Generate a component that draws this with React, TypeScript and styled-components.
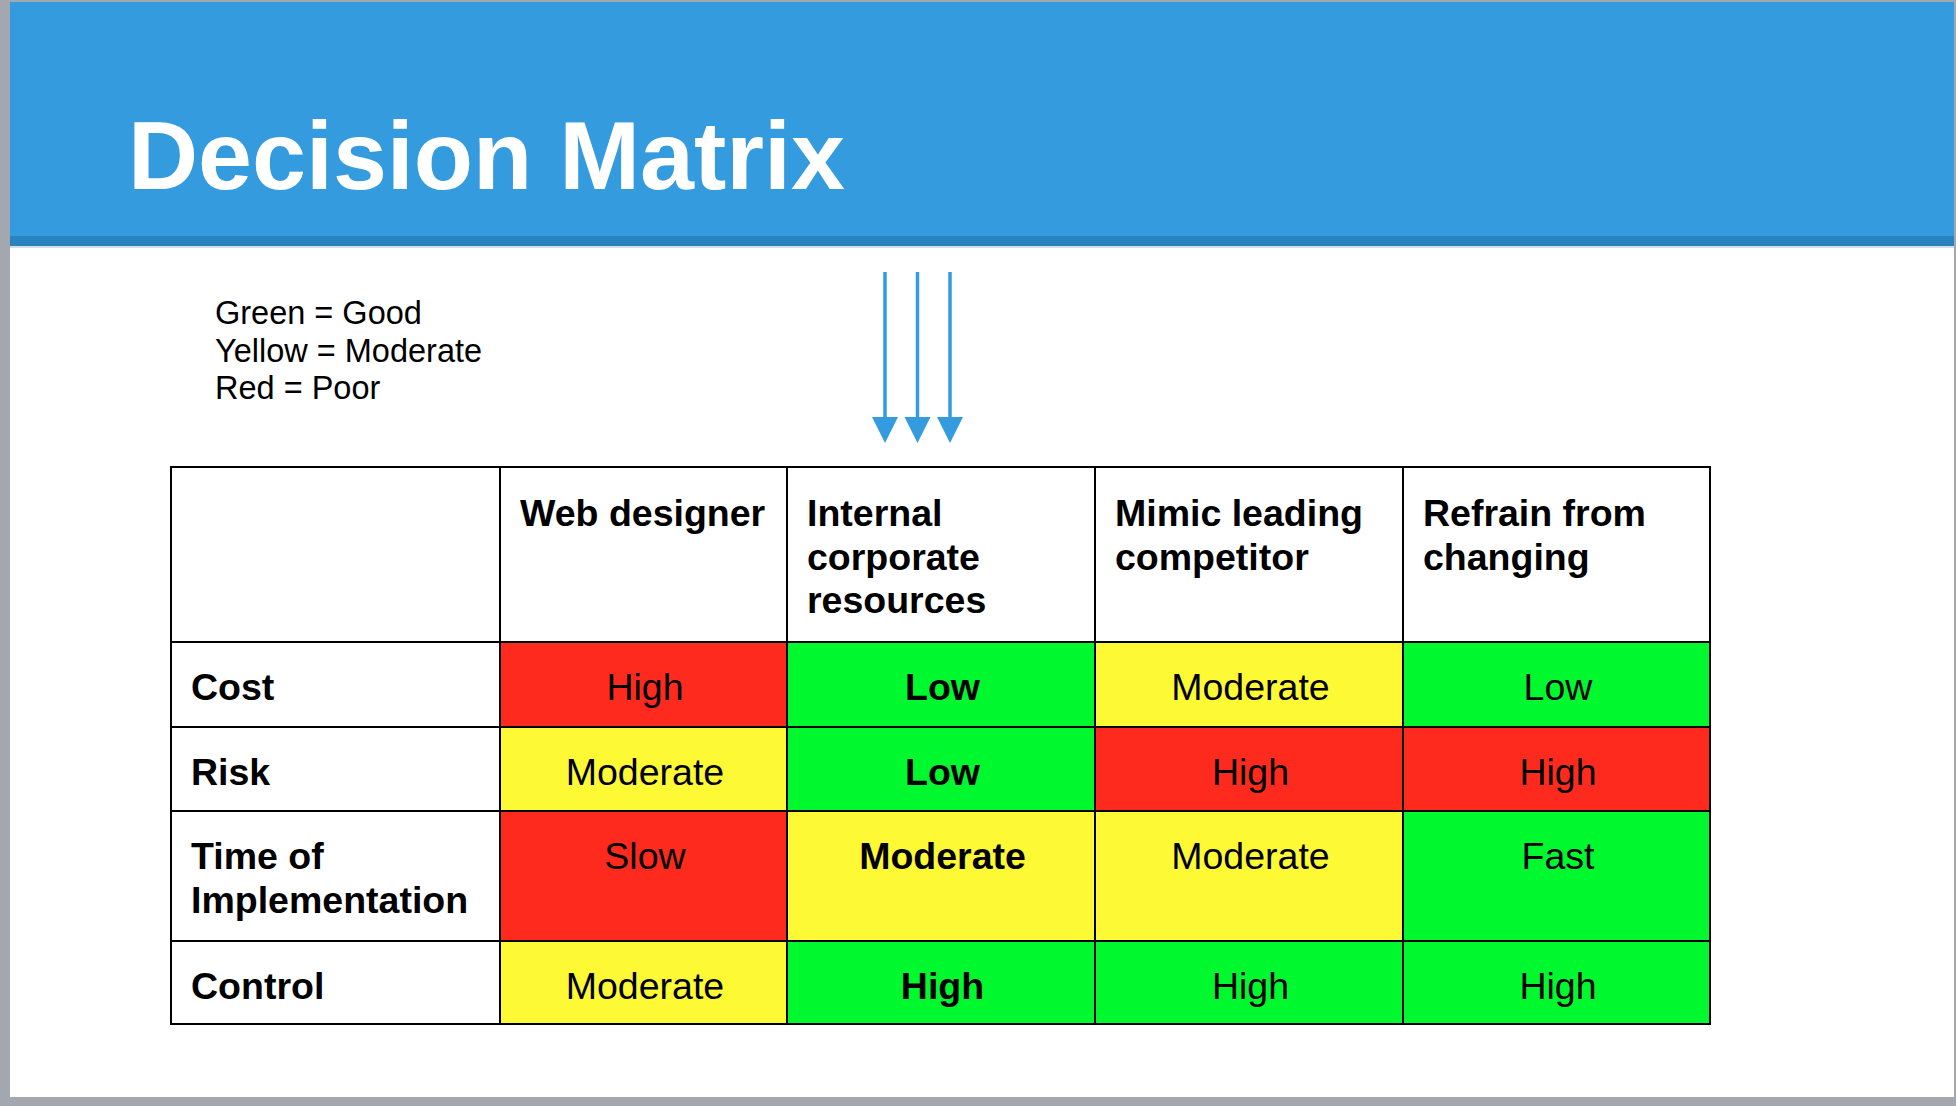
import styled, { createGlobalStyle } from "styled-components";

const GlobalStyle = createGlobalStyle`
  html, body {
    margin: 0;
    padding: 0;
    background: #a3a8b0;
    font-family: "Liberation Sans", Arial, sans-serif;
  }
`;

const Slide = styled.div`
  margin: 2px 2px 9px 10px;
  width: 1944px;
  height: 1095px;
  background: #ffffff;
  display: flex;
  flex-direction: column;
`;

const TitleBar = styled.header`
  height: 234px;
  background: #349bdf;
  border-bottom: 10px solid #2883bf;
  box-shadow: 0 2px 0 #d3dee8;
  box-sizing: content-box;
  padding-left: 118px;
  display: flex;
  align-items: flex-start;
`;

const Title = styled.h1`
  margin: 105px 0 0;
  font-size: 97px;
  line-height: 1;
  font-weight: 700;
  color: #ffffff;
`;

const Content = styled.main`
  display: flex;
  flex-direction: column;
  padding: 26px 0 0 160px;
`;

const TopRow = styled.div`
  display: grid;
  grid-template-columns: 702px auto;
  align-items: start;
`;

const Legend = styled.div`
  margin: 23px 0 0 45px;
  font-size: 32.5px;
  line-height: 37.5px;
  color: #000000;
`;

const Matrix = styled.div`
  margin-top: 23px;
  display: grid;
  grid-template-columns: 327px 285px 306px 306px 305px;
  grid-template-rows: 173px 83px 82px 128px 81px;
  gap: 2px;
  padding: 2px;
  background: #000000;
  width: max-content;
`;

type Tone = "white" | "red" | "green" | "yellow";

const tones: Record<Tone, string> = {
  white: "#ffffff",
  red: "#ff2a1e",
  green: "#00f82f",
  yellow: "#fdf934",
};

const Cell = styled.div<{ $tone: Tone; $bold?: boolean; $center?: boolean; $head?: boolean }>`
  background: ${(p) => tones[p.$tone]};
  box-sizing: border-box;
  padding: ${(p) => (p.$head ? "24px" : "23px")} 16px 0 19px;
  font-size: 37.5px;
  line-height: 43.5px;
  font-weight: ${(p) => (p.$bold ? 700 : 400)};
  text-align: ${(p) => (p.$center ? "center" : "left")};
  color: #000000;
`;

const Arrows = () => (
  <svg width="92" height="171" viewBox="0 0 92 171">
    {[13, 45.5, 78].map((cx) => (
      <g key={cx} fill="#349bdf">
        <rect x={cx - 1.75} y={0} width={3.5} height={147} />
        <polygon points={`${cx - 13},145 ${cx + 13},145 ${cx},171`} />
      </g>
    ))}
  </svg>
);

const headers = ["Web designer", "Internal corporate resources", "Mimic leading competitor", "Refrain from changing"];

const rows: { label: string; values: [string, Tone][] }[] = [
  { label: "Cost", values: [["High", "red"], ["Low", "green"], ["Moderate", "yellow"], ["Low", "green"]] },
  { label: "Risk", values: [["Moderate", "yellow"], ["Low", "green"], ["High", "red"], ["High", "red"]] },
  { label: "Time of Implementation", values: [["Slow", "red"], ["Moderate", "yellow"], ["Moderate", "yellow"], ["Fast", "green"]] },
  { label: "Control", values: [["Moderate", "yellow"], ["High", "green"], ["High", "green"], ["High", "green"]] },
];

export default function App() {
  return (
    <>
      <GlobalStyle />
      <Slide>
        <TitleBar>
          <Title>Decision Matrix</Title>
        </TitleBar>
        <Content>
          <TopRow>
            <Legend>
              Green = Good
              <br />
              Yellow = Moderate
              <br />
              Red = Poor
            </Legend>
            <Arrows />
          </TopRow>
          <Matrix>
            <Cell $tone="white" $head />
            {headers.map((h) => (
              <Cell key={h} $tone="white" $bold $head>
                {h}
              </Cell>
            ))}
            {rows.map((r) => [
              <Cell key={r.label} $tone="white" $bold>
                {r.label}
              </Cell>,
              ...r.values.map(([v, tone], i) => (
                <Cell key={r.label + i} $tone={tone} $bold={i === 1} $center>
                  {v}
                </Cell>
              )),
            ])}
          </Matrix>
        </Content>
      </Slide>
    </>
  );
}
